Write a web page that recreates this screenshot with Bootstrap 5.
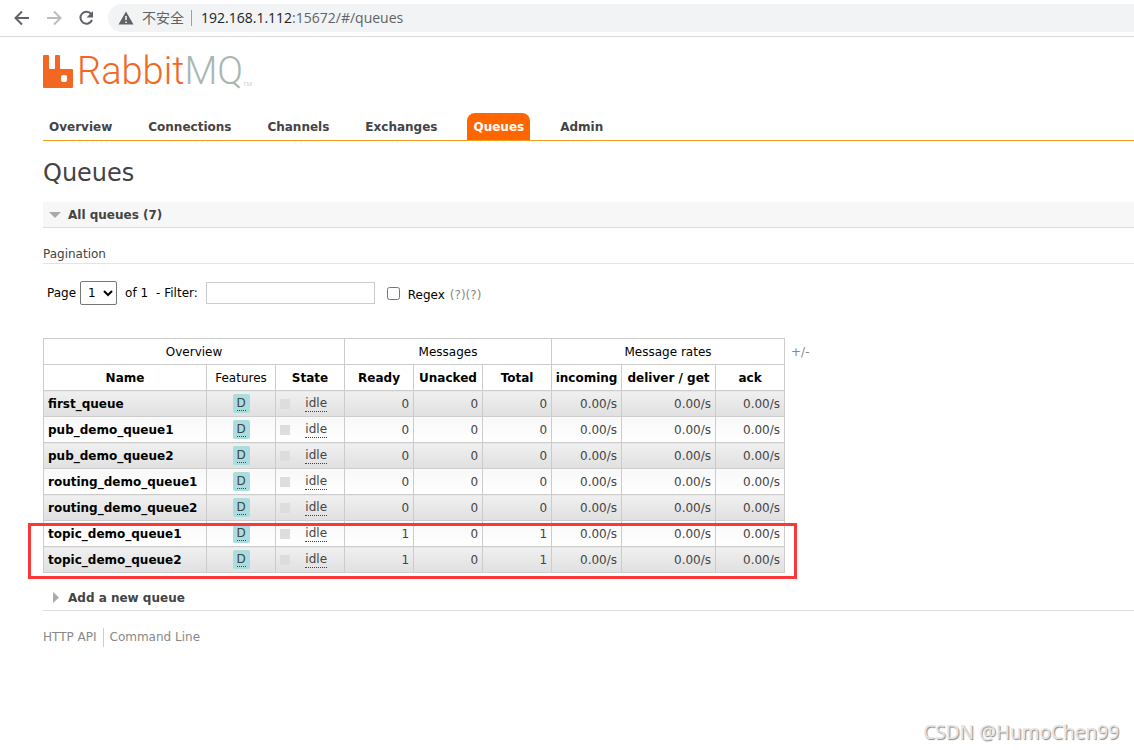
<!DOCTYPE html>
<html lang="en">
<head>
<meta charset="utf-8">
<meta name="viewport" content="width=device-width, initial-scale=1">
<title>RabbitMQ Management</title>
<link href="https://cdn.jsdelivr.net/npm/bootstrap@5.3.0/dist/css/bootstrap.min.css" rel="stylesheet">
<style>
body { font: 12px/16px "DejaVu Sans", Verdana, sans-serif; color: #444; background: #fff; min-height: 100vh; }
a { color: inherit; text-decoration: none; }

/* browser bar */
.browser-bar { height: 37px; border-bottom: 1px solid #dadce0; padding: 4px 0 4px 12px; gap: 12px; }
.browser-bar button { width: 20px; height: 20px; }
.browser-bar svg { display: block; }
.address { background: #f1f3f4; border-radius: 14px 0 0 14px; height: 28px; padding-left: 10px; color: #5f6368; font: 14px/20px "Open Sans", "Noto Sans CJK SC", sans-serif; }
.address .divider { width: 1px; height: 16px; background: #9aa0a6; margin: 0 9px 0 7px; }
.address .warn { margin-right: 8px; }
.address b { font-weight: 400; color: #202124; }

.page { padding-left: 43px; }
.logo { height: 40px; margin-top: 14px; font: 300 38px/40px "Roboto", sans-serif; color: #f26822; }
.logo .mq { color: #a9b7b2; }
.logo .tm { font-size: 6px; line-height: 6px; color: #a9b7b2; align-self: flex-end; margin-bottom: 4px; }

.tabs { margin-top: 22px; border-bottom: 1px solid #f39a21; gap: 24px; }
.tabs .nav-link { padding: 6px 6px 5px; color: #444; font-weight: 700; border-radius: 8px 8px 0 0; }
.tabs .nav-link.active { background: #f60; color: #fff; }

h1 { font-size: 24px; line-height: 32px; margin: 16px 0 13px; }
.section-head { font-size: 12px; line-height: 16px; font-weight: 700; height: 26px; margin: 0; padding: 0 9px; border-bottom: 1px solid #ddd; }
.section-head svg { width: 12px; margin-right: 4px; }
.section-open { background: #f7f7f7; padding-left: 6px; }
.section-open svg { margin-right: 7px; }
h3 { font-size: 12px; line-height: 16px; font-weight: 400; margin: 18px 0 17px; padding-bottom: 1px; border-bottom: 1px solid #e4e4e4; }

.filters { color: #000; height: 24px; padding-left: 4px; }
.filters select { width: 37px; height: 24px; margin: 0 8px 0 4px; padding: 0 0 0 3px; border: 1px solid #767676; border-radius: 2px; background: #fff; color: #000; font: inherit; }
.filters .filter-text { width: 169px; height: 22px; border: 1px solid #ccc; margin: 0 12px 0 8px; font: inherit; }
.filters .regex-box { width: 13px; height: 13px; margin: 0 8px 0 0; }
.help { color: #888; margin-left: 5px; }

.queues { margin-top: 33px; gap: 6px; }
.queues table { width: 742px; table-layout: fixed; border-collapse: collapse; color: #444; }
.queues th, .queues td { border: 1px solid #ccc; height: 26px; padding: 4px; white-space: nowrap; }
.queues thead th { color: #000; text-align: center; padding: 4px 0; }
.queues thead .light { font-weight: 400; }
.queues tbody th { color: #000; text-align: left; }
.queues td { text-align: right; }
.queues td.mid { text-align: center; padding: 0; }
.queues tbody tr td, .queues tbody tr th { background: linear-gradient(#f8f8f8, #fff); }
.queues tbody tr:nth-child(odd) td, .queues tbody tr:nth-child(odd) th { background: linear-gradient(#f0f0f0, #e0e0e0); }
.queues abbr { text-decoration: none; cursor: help; border-bottom: 1px dotted #444; display: inline-block; line-height: 14px; }
.durable { background: #aadddd; border-radius: 2px; padding: 2px 4px; display: block; width: 17px; height: 19px; margin: 0 auto; line-height: 14px; }
.queues .durable abbr { line-height: 13px; }
.state { padding: 0 17px 0 4px; height: 16px; }
.queues .state abbr { line-height: 16px; }
.state i { width: 10px; height: 10px; background: #ddd; }
.toggle { color: #888; padding-top: 6px; }
.highlight-box { position: absolute; left: -15px; bottom: -6px; width: 769px; height: 56px; border: 3px solid #fc3737; pointer-events: none; }

.add-queue { margin-top: 12px; }
.footer-links { margin-top: 17px; color: #888; }
.footer-links a { line-height: 19px; }
.footer-links a + a { border-left: 1px solid #ccc; padding-left: 6px; margin-left: 6px; }
.watermark { position: absolute; right: 15px; bottom: 5px; font: 19px/26px "Noto Sans", sans-serif; color: #e4e4e4; text-shadow: 1px 1px 1px #888; }
</style>
</head>
<body class="position-relative overflow-hidden">
<header class="browser-bar d-flex align-items-center">
  <button class="btn p-0 border-0" aria-label="Back"><svg width="20" height="20" fill="none" stroke="#5f6368" stroke-width="2"><path d="M17 10H4M10 3.500 3.500 10 10 16.500"/></svg></button>
  <button class="btn p-0 border-0" aria-label="Forward"><svg width="20" height="20" fill="none" stroke="#babcbe" stroke-width="2"><path d="M3 10h13M10 3.500 16.500 10 10 16.500"/></svg></button>
  <button class="btn p-0 border-0" aria-label="Reload"><svg width="20" height="20"><path d="M15.300 6.200A6 6 0 1 0 16 12" fill="none" stroke="#5f6368" stroke-width="2"/><path d="M17 3v6.500h-6.500z" fill="#5f6368"/></svg></button>
  <div class="address d-flex align-items-center flex-grow-1">
    <svg class="warn" width="16" height="14"><path d="M8 .5 15.500 13.500H.5z" fill="#5f6368"/><path d="M8 5v4M8 10.500v1.500" stroke="#fff" stroke-width="1.500"/></svg>
    <span>不安全</span><span class="divider"></span>
    <span><b>192.168.1.112</b>:15672/#/queues</span>
  </div>
</header>

<main class="page">
  <a class="logo d-flex align-items-center" href="#" aria-label="RabbitMQ">
    <svg width="30" height="33" class="me-1"><path fill="#f26822" fill-rule="evenodd" d="M1 0h4q1 0 1 1v12q0 1 1 1h4q1 0 1-1V1q0-1 1-1h3q1 0 1 1v12q0 1 1 1h11q1 0 1 1v17q0 1-1 1H1q-1 0-1-1V1q0-1 1-1zM20 20q-2 0-2 2v3q0 2 2 2h2q2 0 2-2v-3q0-2-2-2z"/></svg>
    <span>Rabbit<span class="mq">MQ</span></span><span class="tm">TM</span>
  </a>
  <nav class="nav tabs">
    <a class="nav-link" href="#">Overview</a>
    <a class="nav-link" href="#">Connections</a>
    <a class="nav-link" href="#">Channels</a>
    <a class="nav-link" href="#">Exchanges</a>
    <a class="nav-link active" href="#" aria-current="page">Queues</a>
    <a class="nav-link" href="#">Admin</a>
  </nav>

  <h1 class="fw-normal">Queues</h1>
  <h2 class="section-head section-open d-flex align-items-center"><svg height="6"><path d="M0 0h12L6 6z" fill="#aaa"/></svg>All queues (7)</h2>
  <h3>Pagination</h3>

  <form class="filters d-flex align-items-center">
    <label for="page">Page</label>
    <select id="page"><option>1</option></select>
    <span class="me-2">of 1</span>
    <label for="filter">- Filter:</label>
    <input id="filter" class="filter-text" type="text">
    <input id="regex" class="regex-box" type="checkbox">
    <label class="pt-1" for="regex">Regex</label>
    <span class="help pt-1">(?)(?)</span>
  </form>

  <div class="queues d-flex align-items-start">
    <div class="position-relative">
      <table>
        <colgroup><col style="width:163px"><col style="width:69px"><col style="width:69px"><col style="width:69px"><col style="width:69px"><col style="width:69px"><col style="width:70px"><col style="width:94px"><col style="width:69px"></colgroup>
        <thead>
          <tr><th class="light" colspan="3">Overview</th><th class="light" colspan="3">Messages</th><th class="light" colspan="3">Message rates</th></tr>
          <tr><th>Name</th><th class="light">Features</th><th>State</th><th>Ready</th><th>Unacked</th><th>Total</th><th>incoming</th><th>deliver / get</th><th>ack</th></tr>
        </thead>
        <tbody>
          <tr><th><a href="#">first_queue</a></th><td class="mid"><span class="durable"><abbr title="durable">D</abbr></span></td><td class="p-0"><div class="state d-flex align-items-center justify-content-between"><i></i><abbr title="idle">idle</abbr></div></td><td>0</td><td>0</td><td>0</td><td>0.00/s</td><td>0.00/s</td><td>0.00/s</td></tr>
          <tr><th><a href="#">pub_demo_queue1</a></th><td class="mid"><span class="durable"><abbr title="durable">D</abbr></span></td><td class="p-0"><div class="state d-flex align-items-center justify-content-between"><i></i><abbr title="idle">idle</abbr></div></td><td>0</td><td>0</td><td>0</td><td>0.00/s</td><td>0.00/s</td><td>0.00/s</td></tr>
          <tr><th><a href="#">pub_demo_queue2</a></th><td class="mid"><span class="durable"><abbr title="durable">D</abbr></span></td><td class="p-0"><div class="state d-flex align-items-center justify-content-between"><i></i><abbr title="idle">idle</abbr></div></td><td>0</td><td>0</td><td>0</td><td>0.00/s</td><td>0.00/s</td><td>0.00/s</td></tr>
          <tr><th><a href="#">routing_demo_queue1</a></th><td class="mid"><span class="durable"><abbr title="durable">D</abbr></span></td><td class="p-0"><div class="state d-flex align-items-center justify-content-between"><i></i><abbr title="idle">idle</abbr></div></td><td>0</td><td>0</td><td>0</td><td>0.00/s</td><td>0.00/s</td><td>0.00/s</td></tr>
          <tr><th><a href="#">routing_demo_queue2</a></th><td class="mid"><span class="durable"><abbr title="durable">D</abbr></span></td><td class="p-0"><div class="state d-flex align-items-center justify-content-between"><i></i><abbr title="idle">idle</abbr></div></td><td>0</td><td>0</td><td>0</td><td>0.00/s</td><td>0.00/s</td><td>0.00/s</td></tr>
          <tr><th><a href="#">topic_demo_queue1</a></th><td class="mid"><span class="durable"><abbr title="durable">D</abbr></span></td><td class="p-0"><div class="state d-flex align-items-center justify-content-between"><i></i><abbr title="idle">idle</abbr></div></td><td>1</td><td>0</td><td>1</td><td>0.00/s</td><td>0.00/s</td><td>0.00/s</td></tr>
          <tr><th><a href="#">topic_demo_queue2</a></th><td class="mid"><span class="durable"><abbr title="durable">D</abbr></span></td><td class="p-0"><div class="state d-flex align-items-center justify-content-between"><i></i><abbr title="idle">idle</abbr></div></td><td>1</td><td>0</td><td>1</td><td>0.00/s</td><td>0.00/s</td><td>0.00/s</td></tr>
        </tbody>
      </table>
      <div class="highlight-box"></div>
    </div>
    <a class="toggle" href="#">+/-</a>
  </div>

  <h2 class="section-head add-queue d-flex align-items-center"><svg height="12"><path d="M1 0v11l6-5.500z" fill="#aaa"/></svg>Add a new queue</h2>
  <footer class="footer-links d-flex"><a href="#">HTTP API</a><a href="#">Command Line</a></footer>
</main>
<div class="watermark">CSDN @HumoChen99</div>
<script src="https://cdn.jsdelivr.net/npm/bootstrap@5.3.0/dist/js/bootstrap.bundle.min.js"></script>
</body>
</html>
